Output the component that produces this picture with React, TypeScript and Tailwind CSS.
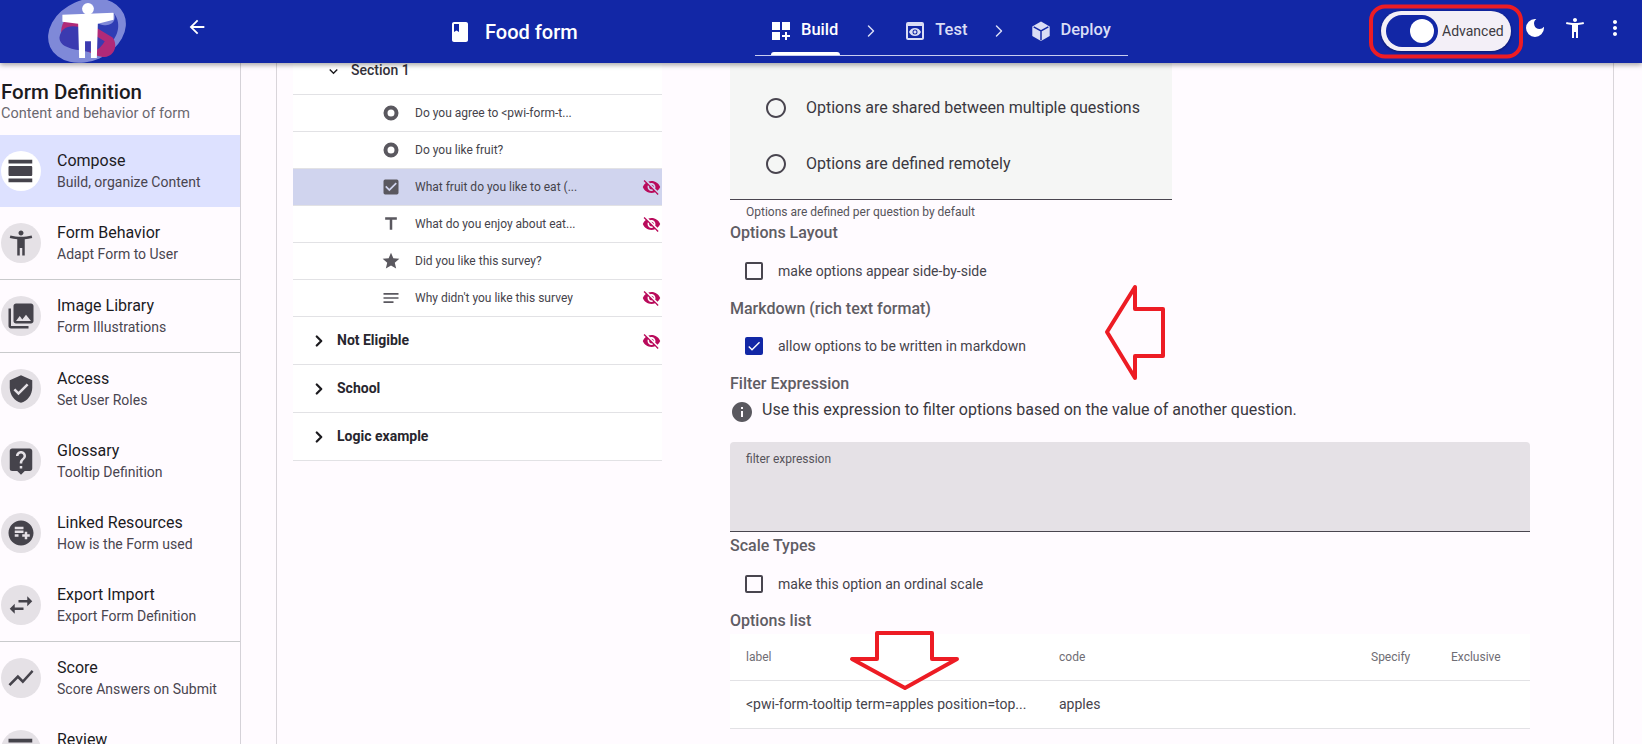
import type { ReactNode } from 'react'
import { ChevronRight } from 'lucide-react'
import {
  MdAccessibilityNew, MdArrowBack, MdBook, MdCheck, MdCheckBox, MdDarkMode, MdDashboardCustomize,
  MdExpandMore, MdInfo, MdLiveHelp, MdMoreVert, MdNotes, MdPhotoLibrary, MdPlaylistAddCircle,
  MdPreview, MdRadioButtonUnchecked, MdShowChart, MdStar, MdSwapHoriz, MdTitle,
  MdVerifiedUser, MdViewDay, MdVisibilityOff,
} from 'react-icons/md'

function Logo() {
  return (
    <svg viewBox="0 0 80 64" className="w-[80px] h-[63px] shrink-0">
      <ellipse cx="40" cy="31" rx="41" ry="31" transform="rotate(-24 40 31)" fill="#7F89D8" />
      <path d="M18 26 C26 12 42 18 52 24 C66 30 72 18 66 12 C74 20 74 34 64 44 L40 30 Z" fill="#2F3DB4" />
      <path d="M14 36 C12 20 24 12 36 20 L66 38 C72 46 68 58 56 58 C44 56 26 44 14 36 Z" fill="#B12A78" />
      <path d="M12 38 C14 26 26 24 38 30 L58 42 C52 52 46 54 38 52 C26 50 12 48 12 38 Z" fill="#3B3AB0" />
      <circle cx="41" cy="9" r="6" fill="#fff" />
      <path d="M15 15 L67 13 L67 20 L51 24 L50 59 L44 59 L44 42 L38 42 L38 59 L32 59 L31 24 L15 22 Z" fill="#fff" />
    </svg>
  )
}

function DeployIcon() {
  return (
    <svg viewBox="0 0 24 24" className="w-[22px] h-[26px] fill-[#DADDF5]">
      <path d="M12 1.5 21.5 7v10.5L12 23l-9.5-5.5V7z" />
      <path d="M4 7.500 12 12l8-4.500M12 12v10" className="fill-none stroke-[#1227A6] stroke-[1.6]" />
    </svg>
  )
}

function RingIcon() {
  return (
    <svg viewBox="0 0 20 20" className="ml-[88px] w-[20px] h-[20px] fill-none stroke-[#5a585f] stroke-[4]">
      <circle cx="10" cy="10" r="5.500" />
    </svg>
  )
}

function Step({ icon, label, active }: { icon: ReactNode; label: string; active?: boolean }) {
  return (
    <div className={`flex items-center gap-[8px] text-[16.500px] font-medium ${active ? 'text-white' : 'text-[#DADDF5]'}`}>
      {icon}
      <span>{label}</span>
    </div>
  )
}

function Header() {
  return (
    <header className="relative z-10 h-[63px] shrink-0 flex items-center bg-[#1227A6] shadow-[0_2px_5px_rgba(0,0,0,0.35)]">
      <div className="ml-[47px] w-[139px] shrink-0"><Logo /></div>
      <MdArrowBack className="-mt-[9px] text-white" size={22} />
      <MdBook className="ml-[240px] text-white" size={24} />
      <span className="ml-[13px] w-[94px] text-[20px] font-medium text-white whitespace-nowrap">Food form</span>
      <div className="relative ml-[176px] w-[373px] h-[63px] flex items-center pl-[16px] pb-[2px]">
        <Step active label="Build" icon={<MdDashboardCustomize size={24} className="-ml-[2px]" />} />
        <ChevronRight className="ml-[23px] text-[#DADDF5]" size={20} strokeWidth={1.75} />
        <div className="ml-[22px]"><Step label="Test" icon={<MdPreview size={24} />} /></div>
        <ChevronRight className="ml-[22px] text-[#DADDF5]" size={20} strokeWidth={1.75} />
        <div className="ml-[21px]"><Step label="Deploy" icon={<DeployIcon />} /></div>
        <div className="absolute left-0 right-0 top-[55px] h-px bg-[#C9CDF0]" />
        <div className="absolute left-[16px] w-[69px] top-[52px] h-[3px] rounded-t bg-white" />
      </div>
      <div className="ml-[253px] w-[130px] h-[40px] -mt-[1px] flex items-center rounded-full bg-[#F3EFF7] shadow-[0_1px_3px_rgba(0,0,0,0.4)]">
        <div className="ml-[5px] w-[52px] h-[32px] rounded-full bg-[#1227A6] flex items-center justify-end pr-[4px]">
          <div className="w-[24px] h-[24px] rounded-full bg-white" />
        </div>
        <span className="ml-[4px] text-[14px] text-[#3d3a42]">Advanced</span>
      </div>
      <MdDarkMode className="ml-[12px] -mt-[8px] text-white" size={24} />
      <MdAccessibilityNew className="ml-[16px] -mt-[8px] text-white" size={24} />
      <MdMoreVert className="ml-[16px] -mt-[8px] text-white" size={24} />
    </header>
  )
}

const navRows = [
  { title: 'Compose', sub: 'Build, organize Content', icon: MdViewDay, active: true },
  { title: 'Form Behavior', sub: 'Adapt Form to User', icon: MdAccessibilityNew, rule: true },
  { title: 'Image Library', sub: 'Form Illustrations', icon: MdPhotoLibrary, rule: true },
  { title: 'Access', sub: 'Set User Roles', icon: MdVerifiedUser },
  { title: 'Glossary', sub: 'Tooltip Definition', icon: MdLiveHelp },
  { title: 'Linked Resources', sub: 'How is the Form used', icon: MdPlaylistAddCircle },
  { title: 'Export Import', sub: 'Export Form Definition', icon: MdSwapHoriz, rule: true },
  { title: 'Score', sub: 'Score Answers on Submit', icon: MdShowChart },
  { title: 'Review', sub: '\u00a0', icon: MdViewDay },
]

function Sidebar() {
  return (
    <aside className="w-[241px] shrink-0 border-r border-[#D5D2D8] overflow-hidden">
      <div className="h-[72px] pt-[17px] pl-[1px]">
        <div className="text-[20.500px] leading-[24px] font-medium text-[#1c1b1f]">Form Definition</div>
        <div className="text-[14.500px] leading-[20px] text-[#6b6870]">Content and behavior of form</div>
      </div>
      {navRows.map(r => (
        <div
          key={r.title}
          className={`h-[72px] box-content flex items-center ${r.active ? 'bg-[#DDE1FF]' : ''} ${r.rule ? 'border-b border-[#C9CACC]' : ''}`}
        >
          <div className={`ml-[1px] w-[40px] h-[40px] rounded-full flex items-center justify-center text-[#45434B] ${r.active ? 'bg-white' : 'bg-[#E5E1E6]'}`}>
            <r.icon size={30} />
          </div>
          <div className="ml-[16px] pt-[1px]">
            <div className="text-[16px] leading-[22px] text-[#1c1b1f]">{r.title}</div>
            <div className="text-[14px] leading-[21px] text-[#49454F]">{r.sub}</div>
          </div>
        </div>
      ))}
    </aside>
  )
}

function HiddenMark() {
  return <MdVisibilityOff className="absolute right-[1px] top-1/2 -translate-y-1/2 text-[#B90B5B]" size={19} />
}

const questions = [
  { text: 'Do you agree to <pwi-form-t...', ring: true },
  { text: 'Do you like fruit?', ring: true },
  { text: 'What fruit do you like to eat (...', icon: MdCheckBox, selected: true, hidden: true },
  { text: 'What do you enjoy about eat...', icon: MdTitle, hidden: true },
  { text: 'Did you like this survey?', icon: MdStar },
  { text: "Why didn't you like this survey", icon: MdNotes, hidden: true },
]

const sections = [
  { text: 'Not Eligible', hidden: true },
  { text: 'School' },
  { text: 'Logic example' },
]

function FormTree() {
  return (
    <div className="ml-[16px] w-[369px] shrink-0 self-start bg-white">
      <div className="h-[32px] flex items-start border-b border-[#E2E2E5]">
        <MdExpandMore className="ml-[32px] text-[#1c1b1f]" size={17} />
        <span className="ml-[9px] text-[14px] leading-[15px] font-medium text-[#33313a]">Section 1</span>
      </div>
      {questions.map(q => (
        <div
          key={q.text}
          className={`relative h-[37px] flex items-center border-b border-[#E2E2E5] ${q.selected ? 'bg-[#D0D4EE]' : ''}`}
        >
          {q.icon ? <q.icon className="ml-[88px] text-[#5a585f]" size={20} /> : <RingIcon />}
          <span className="ml-[14px] text-[12px] text-[#45434B]">{q.text}</span>
          {q.hidden && <HiddenMark />}
        </div>
      ))}
      {sections.map(s => (
        <div key={s.text} className="relative h-[48px] flex items-center border-b border-[#E2E2E5]">
          <ChevronRight className="ml-[17px] text-[#1c1b1f]" size={18} strokeWidth={3} />
          <span className="ml-[9px] text-[14px] font-bold text-[#28262e]">{s.text}</span>
          {s.hidden && <HiddenMark />}
        </div>
      ))}
    </div>
  )
}

function OptionRadio({ label }: { label: string }) {
  return (
    <div className="h-[56px] flex items-center pl-[34px]">
      <MdRadioButtonUnchecked className="text-[#49454F]" size={24} />
      <span className="ml-[18px] text-[16px] text-[#3a3840]">{label}</span>
    </div>
  )
}

function Heading({ children }: { children: ReactNode }) {
  return <div className="text-[16px] leading-[22px] font-medium text-[#5f5d64]">{children}</div>
}

function Check({ label, checked }: { label: string; checked?: boolean }) {
  return (
    <div className="h-[38px] flex items-center pl-[15px]">
      {checked ? (
        <span className="w-[18px] h-[18px] rounded-[2px] bg-[#1227A6] flex items-center justify-center text-white">
          <MdCheck size={16} />
        </span>
      ) : (
        <span className="w-[18px] h-[18px] rounded-[2px] border-2 border-[#49454F]" />
      )}
      <span className="ml-[15px] text-[14px] text-[#45434B]">{label}</span>
    </div>
  )
}

function Settings() {
  return (
    <div className="ml-[68px] w-[800px] shrink-0">
      <div className="w-[442px] h-[137px] bg-[#F5F6F5] border-b border-[#49454F] pt-[17px]">
        <OptionRadio label="Options are shared between multiple questions" />
        <OptionRadio label="Options are defined remotely" />
      </div>
      <div className="pl-[16px] text-[12px] leading-[24px] text-[#55535a]">Options are defined per question by default</div>
      <div className="-mt-[2px]"><Heading>Options Layout</Heading></div>
      <div className="mt-[8px]"><Check label="make options appear side-by-side" /></div>
      <div className="mt-[8px]"><Heading>Markdown (rich text format)</Heading></div>
      <div className="mt-[7px]"><Check label="allow options to be written in markdown" checked /></div>
      <div className="mt-[8px]"><Heading>Filter Expression</Heading></div>
      <div className="mt-[2px] flex items-center h-[26px]">
        <MdInfo className="text-[#5a585f] mt-[3px]" size={24} />
        <span className="ml-[8px] text-[16px] text-[#3a3840]">Use this expression to filter options based on the value of another question.</span>
      </div>
      <div className="mt-[19px] h-[90px] rounded-t-[4px] bg-[#E5E1E6] border-b border-[#49454F] pl-[16px] pt-[8px] text-[12px] text-[#55535a]">
        filter expression
      </div>
      <div className="mt-[3px]"><Heading>Scale Types</Heading></div>
      <div className="mt-[8px]"><Check label="make this option an ordinal scale" /></div>
      <div className="mt-[7px]"><Heading>Options list</Heading></div>
      <div className="mt-[2px] bg-white">
        <div className="h-[47px] flex items-center border-b border-[#E2E2E5] text-[12px] text-[#6f6d74]">
          <span className="ml-[16px] w-[313px]">label</span>
          <span className="w-[312px]">code</span>
          <span className="w-[80px]">Specify</span>
          <span>Exclusive</span>
        </div>
        <div className="h-[48px] flex items-center border-b border-[#E2E2E5] text-[14px] text-[#45434B]">
          <span className="ml-[16px] w-[313px] whitespace-nowrap">&lt;pwi-form-tooltip term=apples position=top...</span>
          <span>apples</span>
        </div>
      </div>
    </div>
  )
}

function Annotations() {
  return (
    <svg className="absolute inset-0 z-20 w-[1642px] h-[744px] pointer-events-none fill-none stroke-[#ED1C24] stroke-[4]">
      <rect x="1371" y="6.500" width="150" height="50" rx="14" />
      <polygon points="1107,332 1135,287 1135,309 1163,309 1163,356 1135,356 1135,378" strokeLinejoin="round" />
      <polygon points="877,633 932,633 932,659 957,659 905,688 852,659 877,659" strokeLinejoin="round" />
    </svg>
  )
}

export default function App() {
  return (
    <div className="relative w-[1642px] h-[744px] overflow-hidden flex flex-col bg-[#FFFBFF] font-['Roboto',sans-serif]">
      <Header />
      <div className="flex-1 flex min-h-0">
        <Sidebar />
        <main className="ml-[35px] mr-[28px] flex-1 flex border-x border-[#D9D5DA] overflow-hidden">
          <FormTree />
          <Settings />
        </main>
      </div>
      <Annotations />
    </div>
  )
}
